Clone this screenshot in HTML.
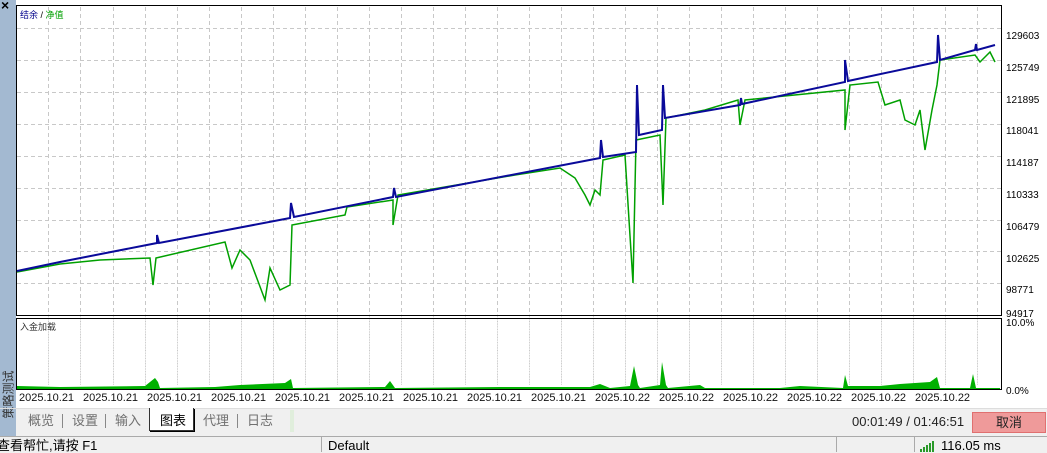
<!DOCTYPE html>
<html><head><meta charset="utf-8"><style>
body{margin:0;width:1047px;height:452px;overflow:hidden;background:#f0f0f0;font-family:"Liberation Sans","Noto Sans CJK SC",sans-serif;position:relative}
.a{position:absolute;white-space:nowrap}
.tab{position:absolute;top:412px;font-size:13px;color:#707070;line-height:18px}
.d{position:absolute;top:392px;font-size:11px;color:#111}
.s{position:absolute;top:438px;font-size:13px;line-height:15px;white-space:nowrap}
</style></head><body>
<div class="a" style="left:0;top:0;width:16px;height:437px;background:#a3b9d1"></div>
<div class="a" style="left:1px;top:-3px;font-size:14px;font-weight:bold">×</div>
<div class="a" style="left:-22px;top:380px;transform:rotate(-90deg);font-size:12px;color:#333;width:60px">策略测试</div>
<div class="a" style="left:16px;top:0;width:1031px;height:408px;background:#fff"></div>
<svg class="a" style="left:0;top:0" width="1047" height="408">
<g stroke="#c8c8c8" stroke-dasharray="4,3" stroke-width="1">
<path d="M17 28.5H1001M17 60.5H1001M17 92.5H1001M17 124.5H1001M17 156.5H1001M17 188.5H1001M17 220.5H1001M17 251.5H1001M17 283.5H1001"/>
<path id="v" d="M48.5 7V315M80.5 7V315M113.5 7V315M145.5 7V315M177.5 7V315M209.5 7V315M241.5 7V315M273.5 7V315M305.5 7V315M337.5 7V315M369.5 7V315M401.5 7V315M433.5 7V315M465.5 7V315M497.5 7V315M529.5 7V315M561.5 7V315M593.5 7V315M625.5 7V315M657.5 7V315M689.5 7V315M721.5 7V315M753.5 7V315M785.5 7V315M817.5 7V315M849.5 7V315M881.5 7V315M913.5 7V315M945.5 7V315M977.5 7V315"/>
<use href="#v" transform="translate(0,313) scale(1,0.23)"/>
</g>
<rect x="16.5" y="5.5" width="985" height="310" fill="none" stroke="#000"/>
<rect x="16.5" y="318.5" width="985" height="71" fill="none" stroke="#000"/>
<polyline fill="none" stroke="#00a000" stroke-width="1.5" points="17,272 60,264 100,260 150,258 153,285 156,258 225,242 232,268 240,250 250,260 265,300 270,268 280,290 290,285 292,225 345,215 347,207 393,200 393,225 398,195 515,175 560,168 575,178 585,195 590,205 595,190 600,195 603,160 625,155 629,220 633,283 636,140 660,135 663,205 666,118 705,110 738,100 740,125 745,100 845,90 845,130 850,85 878,82 885,105 900,100 905,120 915,125 920,110 925,150 932,110 937,85 940,60 975,55 980,62 990,52 995,62"/>
<polyline fill="none" stroke="#0a0a9a" stroke-width="2" points="17,271 60,262 157,243 157,235 159,243 290,218 291,203 294,217 393,197 394,188 396,197 600,158 601,140 603,157 636,152 637,85 639,135 662,130 663,85 665,118 740,105 741,98 742,104 845,82 845,60 848,81 937,62 938,35 940,60 975,50 976,44 977,50 995,45"/>
<polygon fill="#00b000" points="17,389 17,386 60,387 145,386 150,382 155,378 158,382 160,388 215,387 240,385 285,383 291,379 293,388 385,387 390,381 395,388 500,387 590,387 600,384 610,388 630,386 634,366 638,385 640,388 660,385 662,362 666,385 668,388 700,385 705,388 780,388 800,386 843,388 845,375 848,386 880,386 900,384 930,382 937,377 940,388 970,388 973,374 976,388 1000,388 1000,389"/>
</svg>
<div class="a" style="left:20px;top:8px;font-size:9px"><span style="color:#00008b">结余</span> / <span style="color:#00a000">净值</span></div>
<div class="a" style="left:20px;top:320px;font-size:9px;color:#333">入金加载</div>
<div class="a" style="left:1006px;top:21px;font-size:10px;line-height:31.8px">129603<br>125749<br>121895<br>118041<br>114187<br>110333<br>106479<br>102625<br>98771</div>
<div class="a" style="left:1006px;top:309px;font-size:10px">94917</div>
<div class="a" style="left:1006px;top:318px;font-size:10px">10.0%</div>
<div class="a" style="left:1006px;top:386px;font-size:10px">0.0%</div>
<div class="d" style="left:19px">2025.10.21</div>
<div class="d" style="left:83px">2025.10.21</div>
<div class="d" style="left:147px">2025.10.21</div>
<div class="d" style="left:211px">2025.10.21</div>
<div class="d" style="left:275px">2025.10.21</div>
<div class="d" style="left:339px">2025.10.21</div>
<div class="d" style="left:403px">2025.10.21</div>
<div class="d" style="left:467px">2025.10.21</div>
<div class="d" style="left:531px">2025.10.21</div>
<div class="d" style="left:595px">2025.10.22</div>
<div class="d" style="left:659px">2025.10.22</div>
<div class="d" style="left:723px">2025.10.22</div>
<div class="d" style="left:787px">2025.10.22</div>
<div class="d" style="left:851px">2025.10.22</div>
<div class="d" style="left:915px">2025.10.22</div>
<div class="a" style="left:0;top:408px;width:1047px;height:1px;background:#ddd"></div>
<div class="tab" style="left:28px">概览</div>
<div class="a" style="left:62px;top:414px;width:1px;height:14px;background:#888"></div>
<div class="tab" style="left:72px">设置</div>
<div class="a" style="left:105px;top:414px;width:1px;height:14px;background:#888"></div>
<div class="tab" style="left:115px">输入</div>
<div class="a" style="left:149px;top:408px;width:43px;height:22px;background:#fff;border:1px solid #333;border-top:none;box-shadow:1px 1px 0 #000"></div>
<div class="tab" style="left:160px;color:#000">图表</div>
<div class="tab" style="left:203px">代理</div>
<div class="a" style="left:237px;top:414px;width:1px;height:14px;background:#888"></div>
<div class="tab" style="left:247px">日志</div>
<div class="a" style="left:290px;top:410px;width:4px;height:22px;background:#e0eedc"></div>
<div class="a" style="left:852px;top:414px;font-size:13px;color:#222">00:01:49 / 01:46:51</div>
<div class="a" style="left:972px;top:412px;width:72px;height:19px;background:#ef9a9a;border:1px solid #e07070;text-align:center;font-size:13px;line-height:19px;color:#222">取消</div>
<div class="a" style="left:0;top:436px;width:1047px;height:16px;background:#f0f0f0;border-top:1px solid #aaa"></div>
<div class="s" style="left:-3px">查看帮忙,请按 F1</div>
<div class="a" style="left:321px;top:437px;width:1px;height:15px;background:#aaa"></div>
<div class="s" style="left:328px">Default</div>
<div class="a" style="left:836px;top:437px;width:1px;height:15px;background:#aaa"></div>
<div class="a" style="left:914px;top:437px;width:1px;height:15px;background:#aaa"></div>
<svg class="a" style="left:920px;top:440px" width="16" height="12"><g fill="#2a9a2a"><rect x="0" y="9" width="2" height="3"/><rect x="3" y="7" width="2" height="5"/><rect x="6" y="5" width="2" height="7"/><rect x="9" y="3" width="2" height="9"/><rect x="12" y="1" width="2" height="11"/></g></svg>
<div class="s" style="left:941px">116.05 ms</div>
</body></html>
